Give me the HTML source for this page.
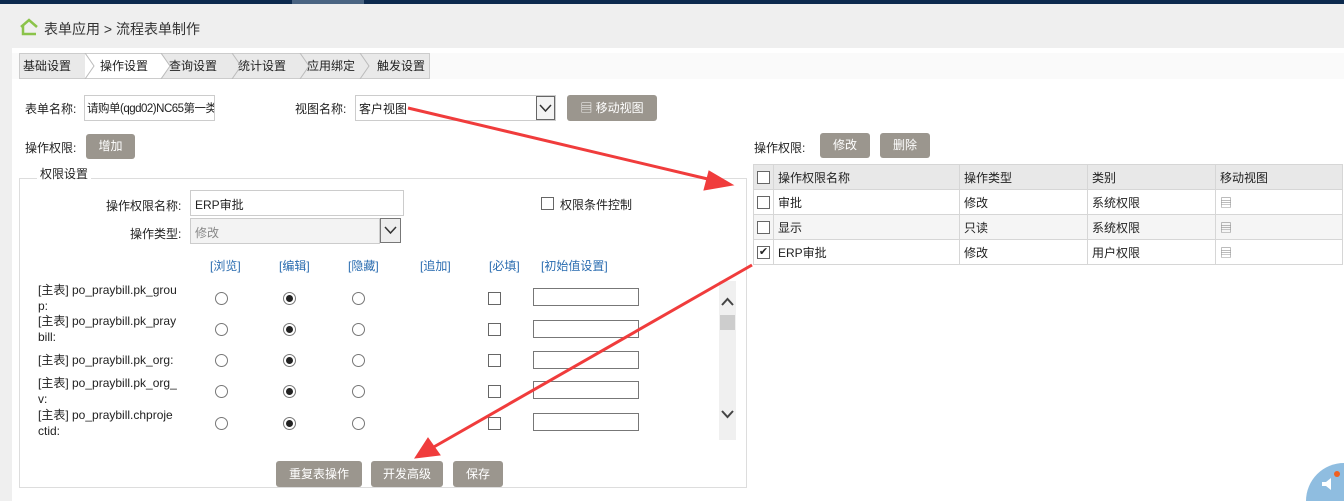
<!DOCTYPE html>
<html><head><meta charset="utf-8"><style>
*{margin:0;padding:0;box-sizing:border-box}
html,body{width:1344px;height:501px;overflow:hidden}
body{background:#efefef;font-family:"Liberation Sans","Noto Sans CJK SC",sans-serif;font-size:12px;color:#222;position:relative}
.a{position:absolute;white-space:nowrap}
.btn{position:absolute;background:#9b968e;color:#fff;border-radius:3px;text-align:center;font-size:12px}
.inp{position:absolute;background:#fff;border:1px solid #ccc;white-space:nowrap;overflow:hidden}
.rad{position:absolute;width:13px;height:13px;border:1px solid #777;border-radius:50%;background:#fff}
.rad.on::after{content:"";position:absolute;left:2px;top:2px;width:7px;height:7px;border-radius:50%;background:#222}
.cb{position:absolute;width:13px;height:13px;border:1px solid #666;background:#fff}
.tab{position:absolute;top:54px;height:25px;line-height:25px;font-size:12px}
.lnk{position:absolute;top:257px;color:#2a6cb0}
table{border-collapse:collapse;position:absolute;left:753px;top:164px;width:590px}
td{border:1px solid #d6d6d6;height:25px;padding-left:4px;font-size:12px}
</style></head><body>
<div class="a" style="left:0;top:0;width:1344px;height:4px;background:#0c2a4e"></div>
<div class="a" style="left:292px;top:0;width:72px;height:4px;background:#4a6482"></div>
<svg class="a" style="left:19px;top:18px" width="20" height="18"><path d="M2 9 L10 2 L18 9 M4 8 V16 H17" fill="none" stroke="#8bc34a" stroke-width="2.5"/></svg>
<div class="a" style="left:44px;top:19px;font-size:14px;color:#333">表单应用 &gt; 流程表单制作</div>
<div class="a" style="left:12px;top:48px;width:1332px;height:453px;background:#fff"></div>
<div class="a" style="left:12px;top:53px;width:1332px;height:26px;background:#fafafa"></div>
<div class="a" style="left:19px;top:53px;width:411px;height:26px;border:1px solid #ccc;background:#e9e9e9"></div>
<div class="a" style="left:85px;top:54px;width:76px;height:24px;background:#fff"></div>
<div class="tab" style="left:23px">基础设置</div><div class="tab" style="left:100px">操作设置</div><div class="tab" style="left:169px">查询设置</div><div class="tab" style="left:238px">统计设置</div><div class="tab" style="left:307px">应用绑定</div><div class="tab" style="left:377px">触发设置</div>
<svg class="a" style="left:19px;top:53px" width="412" height="26"><path d="M66 1 L75 13 L66 25 Z" fill="#fff"/><path d="M142 1 L151 13 L142 25 Z" fill="#fff"/><g fill="none" stroke="#bbb"><path d="M66 0 L75 13 L66 26"/><path d="M142 0 L151 13 L142 26"/><path d="M213 0 L222 13 L213 26"/><path d="M281 0 L290 13 L281 26"/><path d="M341 0 L350 13 L341 26"/></g></svg>
<div class="a" style="left:25px;top:100px">表单名称:</div>
<div class="inp" style="left:84px;top:95px;width:131px;height:26px;padding:4px 2px;font-size:11.5px;letter-spacing:-0.5px">请购单(qgd02)NC65第一类</div>
<div class="a" style="left:295px;top:100px">视图名称:</div>
<div class="inp" style="left:355px;top:95px;width:201px;height:26px;padding:4px 3px">客户视图</div>
<div class="a" style="left:536px;top:96px;width:19px;height:24px;border:1px solid #666;background:#f3f3f3"><svg width="17" height="22"><path d="M3 8 L8.5 14 L14 8" fill="none" stroke="#333" stroke-width="1.5"/></svg></div>
<div class="btn" style="left:567px;top:95px;width:90px;height:26px;line-height:26px">▤ 移动视图</div>
<div class="a" style="left:25px;top:139px">操作权限:</div>
<div class="btn" style="left:86px;top:134px;width:49px;height:25px;line-height:25px">增加</div>
<div class="a" style="left:19px;top:178px;width:728px;height:310px;border:1px solid #ddd"></div>
<div class="a" style="left:37px;top:165px;background:#fff;padding:0 3px">权限设置</div>
<div class="a" style="left:106px;top:197px">操作权限名称:</div>
<div class="inp" style="left:190px;top:190px;width:214px;height:26px;padding:5px 4px">ERP审批</div>
<div class="cb" style="left:541px;top:197px"></div><div class="a" style="left:560px;top:196px">权限条件控制</div>
<div class="a" style="left:130px;top:225px">操作类型:</div>
<div class="inp" style="left:190px;top:218px;width:190px;height:26px;background:#f3f3f3;color:#888;padding:5px 4px">修改</div>
<div class="a" style="left:380px;top:218px;width:21px;height:25px;border:1px solid #777;background:#eee"><svg width="19" height="23"><path d="M4 8 L9.5 14 L15 8" fill="none" stroke="#333" stroke-width="1.5"/></svg></div>
<div class="lnk" style="left:210px">[浏览]</div><div class="lnk" style="left:279px">[编辑]</div><div class="lnk" style="left:348px">[隐藏]</div><div class="lnk" style="left:420px">[追加]</div><div class="lnk" style="left:489px">[必填]</div><div class="lnk" style="left:541px">[初始值设置]</div>
<div class="a" style="left:38px;top:282px;line-height:16px">[主表] po_praybill.pk_grou<br>p:</div>
<div class="a" style="left:38px;top:313px;line-height:16px">[主表] po_praybill.pk_pray<br>bill:</div>
<div class="a" style="left:38px;top:352px;line-height:16px">[主表] po_praybill.pk_org:</div>
<div class="a" style="left:38px;top:375px;line-height:16px">[主表] po_praybill.pk_org_<br>v:</div>
<div class="a" style="left:38px;top:407px;line-height:16px">[主表] po_praybill.chproje<br>ctid:</div>
<div class="rad" style="left:215px;top:292px"></div><div class="rad on" style="left:283px;top:292px"></div><div class="rad" style="left:352px;top:292px"></div><div class="cb" style="left:488px;top:292px"></div><div class="inp" style="left:533px;top:288px;width:106px;height:18px;border-color:#777"></div>
<div class="rad" style="left:215px;top:323px"></div><div class="rad on" style="left:283px;top:323px"></div><div class="rad" style="left:352px;top:323px"></div><div class="cb" style="left:488px;top:323px"></div><div class="inp" style="left:533px;top:320px;width:106px;height:18px;border-color:#777"></div>
<div class="rad" style="left:215px;top:354px"></div><div class="rad on" style="left:283px;top:354px"></div><div class="rad" style="left:352px;top:354px"></div><div class="cb" style="left:488px;top:354px"></div><div class="inp" style="left:533px;top:351px;width:106px;height:18px;border-color:#777"></div>
<div class="rad" style="left:215px;top:385px"></div><div class="rad on" style="left:283px;top:385px"></div><div class="rad" style="left:352px;top:385px"></div><div class="cb" style="left:488px;top:385px"></div><div class="inp" style="left:533px;top:381px;width:106px;height:18px;border-color:#777"></div>
<div class="rad" style="left:215px;top:417px"></div><div class="rad on" style="left:283px;top:417px"></div><div class="rad" style="left:352px;top:417px"></div><div class="cb" style="left:488px;top:417px"></div><div class="inp" style="left:533px;top:413px;width:106px;height:18px;border-color:#777"></div>
<div class="a" style="left:719px;top:281px;width:17px;height:159px;background:#f0f0f0"></div>
<div class="a" style="left:720px;top:315px;width:15px;height:15px;background:#cdcdcd"></div>
<svg class="a" style="left:719px;top:290px" width="17" height="140"><g fill="none" stroke="#444" stroke-width="2"><path d="M3 15 L8.5 9 L14 15"/><path d="M3 121 L8.5 127 L14 121"/></g></svg>
<div class="btn" style="left:276px;top:461px;width:86px;height:26px;line-height:26px">重复表操作</div>
<div class="btn" style="left:371px;top:461px;width:72px;height:26px;line-height:26px">开发高级</div>
<div class="btn" style="left:453px;top:461px;width:50px;height:26px;line-height:26px">保存</div>
<div class="a" style="left:754px;top:139px">操作权限:</div>
<div class="btn" style="left:820px;top:133px;width:50px;height:25px;line-height:25px">修改</div>
<div class="btn" style="left:880px;top:133px;width:50px;height:25px;line-height:25px">删除</div>
<table>
<tr style="background:#e8e8e8"><td style="width:19px;padding:0 3px"><div class="cb" style="position:relative"></div></td><td style="width:186px">操作权限名称</td><td style="width:128px">操作类型</td><td style="width:128px">类别</td><td>移动视图</td></tr>
<tr><td style="padding:0 3px"><div class="cb" style="position:relative"></div></td><td>审批</td><td>修改</td><td>系统权限</td><td style="color:#777">▤</td></tr>
<tr style="background:#f5f5f5"><td style="padding:0 3px"><div class="cb" style="position:relative"></div></td><td>显示</td><td>只读</td><td>系统权限</td><td style="color:#777">▤</td></tr>
<tr><td style="padding:0 3px"><div class="cb" style="position:relative;font-size:11px;line-height:11px;text-align:center">✔</div></td><td>ERP审批</td><td>修改</td><td>用户权限</td><td style="color:#777">▤</td></tr>
</table>
<svg class="a" style="left:0;top:0" width="1344" height="501"><g stroke="#f03c3c" fill="#f03c3c">
<line x1="408" y1="108" x2="712" y2="180" stroke-width="3"/><polygon points="733,185 709,171 704,190"/>
<line x1="752" y1="265" x2="432" y2="448" stroke-width="3"/><polygon points="415,458 428,438 440,455"/></g>
<circle cx="1344" cy="501" r="38" fill="#8fbde0"/><path d="M1322 482h4l5-4v12l-5-4h-4z" fill="#fff"/><circle cx="1337" cy="474" r="3" fill="#f06020"/></svg>
</body></html>
